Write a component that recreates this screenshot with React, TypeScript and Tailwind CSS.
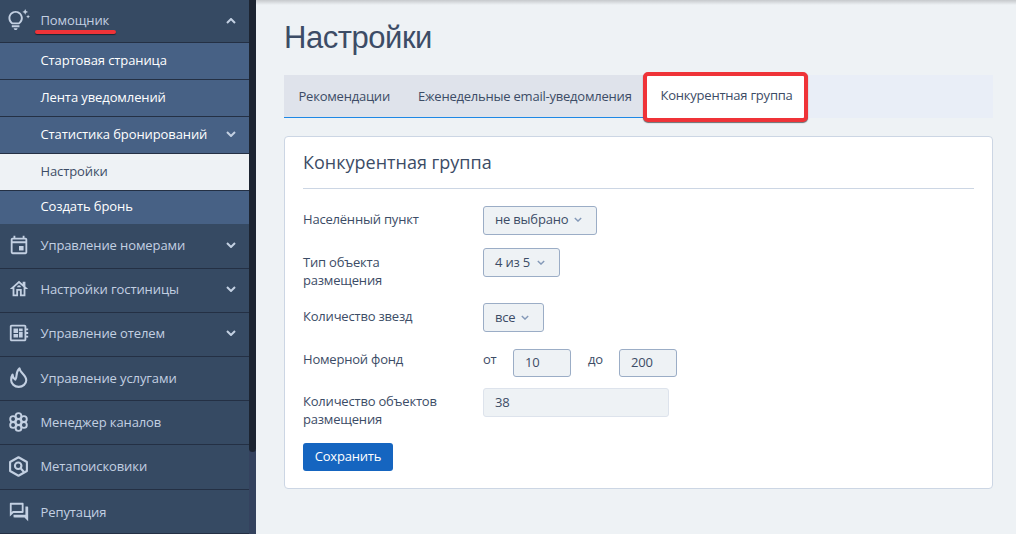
import React from 'react';
import { MdOutlineTipsAndUpdates, MdOutlineEvent, MdOutlineHouse, MdOutlineDeveloperBoard, MdOutlineForum } from 'react-icons/md';

type ChevronProps = {
  up?: boolean;
  className?: string;
}

function Chevron({up, className}: ChevronProps) {
  return (
    <svg viewBox="0 0 10 6" className={className} fill="none" stroke="currentColor">
      <path d={up ? 'M1 5l4-4 4 4' : 'M1 1l4 4 4-4'} />
    </svg>
  );
}

function FlameIcon() {
  return (
    <svg viewBox="0 0 20 20" className="w-[21px] h-[21px]" fill="none" stroke="currentColor" strokeWidth="2" strokeLinejoin="round">
      <path d="M11 1.300C10.800 5 17.400 7.800 17.400 12.600a7.200 6.300 0 0 1-14.400 0C3 10.600 3.300 8.700 4.300 7.200c.1 2 .9 3.700 2.700 4.900C9.200 9.400 6.700 5 11 1.300z" />
    </svg>
  );
}

function ChannelsIcon() {
  return (
    <svg viewBox="0 0 20 20" className="w-[21px] h-5" fill="none" stroke="currentColor" strokeWidth="1.9">
      <circle cx="10" cy="10" r="2.900" />
      <circle cx="10" cy="4" r="2.900" />
      <circle cx="10" cy="16" r="2.900" />
      <circle cx="4.600" cy="7" r="2.900" />
      <circle cx="15.400" cy="7" r="2.900" />
      <circle cx="4.600" cy="13" r="2.900" />
      <circle cx="15.400" cy="13" r="2.900" />
    </svg>
  );
}

function MetasearchIcon() {
  return (
    <svg viewBox="0 0 20 20" className="w-[21px] h-[21px]" fill="none" stroke="currentColor" strokeWidth="2">
      <path d="M10 1.200l8 4.500v8.600l-8 4.500-8-4.500V5.700z" strokeLinejoin="round" />
      <circle cx="9.700" cy="9.300" r="3.100" />
      <path d="M11.800 11.500l3.400 3.700" />
    </svg>
  );
}

const subItems = [
  { label: 'Стартовая страница', row: 'h-[37px] pb-0.5 border-b' },
  { label: 'Лента уведомлений', row: 'h-[37px] pb-0.5 border-b' },
  { label: 'Статистика бронирований', row: 'h-[37px] pb-0.5 border-b', arrow: true },
  { label: 'Настройки', row: 'h-[37px] pb-0.5 border-b', active: true },
  { label: 'Создать бронь', row: 'h-[33px] pb-1' },
];

const items = [
  { label: 'Управление номерами', icon: <MdOutlineEvent size={22} />, row: 'h-[45px] pb-0.5', arrow: true },
  { label: 'Настройки гостиницы', icon: <MdOutlineHouse size={22} />, row: 'h-11 pb-[3px]', arrow: true },
  { label: 'Управление отелем', icon: <MdOutlineDeveloperBoard size={22} />, row: 'h-11 pb-[3px]', arrow: true },
  { label: 'Управление услугами', icon: <FlameIcon />, row: 'h-11 pb-0.5' },
  { label: 'Менеджер каналов', icon: <ChannelsIcon />, row: 'h-11 pb-0.5' },
  { label: 'Метапоисковики', icon: <MetasearchIcon />, row: 'h-[45px] pb-0.5' },
  { label: 'Репутация', icon: <MdOutlineForum size={22} />, row: 'h-11' },
];

function Sidebar() {
  return (
    <aside className="flex w-64 shrink-0 bg-[#34425e]">
      <nav className="w-[249px] bg-[#364a63] text-[#c3d0e2] tracking-[-0.1px]">
        <div className="flex items-center h-[43px] border-b border-[#243044] pr-[13px] pb-px">
          <span className="w-[40.5px] pl-[7px]"><MdOutlineTipsAndUpdates size={23} /></span>
          <span className="relative flex-1 -top-px">
            Помощник
            <span className="absolute -left-[5.5px] top-[19px] w-[81px] h-1 rounded-full bg-[#ef3338] shadow-[0_1px_1px_rgba(0,0,0,0.5)]" />
          </span>
          <Chevron up className="w-2.5 h-1.5 stroke-2" />
        </div>
        {subItems.map((item) => (
          <div
            key={item.label}
            className={`flex items-center justify-between pl-[40.5px] pr-[13px] border-[#243044] ${item.row} ${item.active ? 'bg-[#eef2f5] text-[#3c4c66]' : 'bg-[#476185] text-white'}`}
          >
            {item.label}
            {item.arrow && <Chevron className="w-2.5 h-1.5 stroke-2 text-[#c3d0e2]" />}
          </div>
        ))}
        {items.map((item) => (
          <div key={item.label} className={`flex items-center border-b border-[#243044] pr-[13px] ${item.row}`}>
            <span className="w-[40.5px] pl-2">{item.icon}</span>
            <span className="flex-1">{item.label}</span>
            {item.arrow && <Chevron className="w-2.5 h-1.5 stroke-2" />}
          </div>
        ))}
      </nav>
      <div className="w-[7px] h-[452px] rounded-b-full bg-[#1c2431]" />
    </aside>
  );
}

function Select({value, width}: {value: string, width: string}) {
  return (
    <button className={`flex items-center justify-between h-[29px] pl-[11px] pr-[14px] border border-[#9badc6] rounded-[3px] bg-[#eef2f5] ${width}`}>
      {value}
      <Chevron className="w-2 h-[5px] stroke-[1.7] text-[#8499b8]" />
    </button>
  );
}

export default function App() {
  return (
    <div className="flex w-[1016px] h-[534px] overflow-hidden bg-[#eef2f5] font-['Open_Sans',sans-serif] text-[13px] leading-[18px] text-[#3c4c66]">
      <Sidebar />
      <main className="flex-1 pl-7 pr-[23px] bg-[linear-gradient(to_bottom,#c6c9cc,#eef2f5_5px)] tracking-[-0.2px]">
        <h1 className="pt-[19px] h-[75px] font-['Liberation_Sans',sans-serif] text-[31px] leading-[38px] tracking-[-0.45px]">Настройки</h1>
        <div className="flex h-[43px] bg-[#e9eef7] tracking-[-0.22px]">
          <div className="flex items-center w-[360px] border-b border-[#1e88e5] bg-[#dfe3eb]">
            <span className="w-[134px] pl-[14.5px]">Рекомендации</span>
            <span className="whitespace-nowrap">Еженедельные email-уведомления</span>
          </div>
          <div className="relative z-10 -mt-[3px] -ml-px w-[165px] h-[50px] border-4 border-[#ef3338] rounded-[5px] bg-white pl-[13.5px] pt-[10px] shadow-[0_1px_1px_rgba(0,0,0,0.55)]">
            Конкурентная группа
          </div>
        </div>

        <section className="mt-[18px] h-[353px] border border-[#ccd6e4] rounded bg-white px-[18px]">
          <h2 className="h-[52px] pt-[13px] border-b border-[#ccd6e4] text-lg leading-6 tracking-normal">Конкурентная группа</h2>
          <div className="flex items-start h-[43px] mt-[17px]">
            <label className="w-[180px] pt-1">Населённый пункт</label>
            <Select value="не выбрано" width="w-[114px] pb-[3px]" />
          </div>
          <div className="flex items-start h-[54px] -mt-px">
            <label className="w-[180px] pr-10 pt-[5px]">Тип объекта размещения</label>
            <Select value="4 из 5" width="w-[77px] pb-px" />
          </div>
          <div className="flex items-start h-[46px] mt-px">
            <label className="w-[180px] pt-1">Количество звезд</label>
            <Select value="все" width="w-[61px] pb-px" />
          </div>
          <div className="flex items-start h-[39px]">
            <label className="w-[180px] pt-px">Номерной фонд</label>
            <span className="w-[30px] pt-px">от</span>
            <input className="w-[58px] h-7 px-[11px] pb-0.5 border border-[#9badc6] rounded-[3px] bg-[#eef2f5]" defaultValue="10" />
            <span className="w-12 pl-[17px] pt-px">до</span>
            <input className="w-[58px] h-7 px-[11px] pb-0.5 border border-[#9badc6] rounded-[3px] bg-[#eef2f5]" defaultValue="200" />
          </div>
          <div className="flex items-start h-[55px]">
            <label className="w-[180px] pr-10 pt-1">Количество объектов размещения</label>
            <input className="w-[186px] h-[29px] px-[11px] pb-0.5 border border-[#dde3ec] rounded-[3px] bg-[#eef2f5]" defaultValue="38" readOnly />
          </div>
          <button className="w-[90px] h-7 pb-[3px] rounded-[3px] bg-[#1565c0] text-white">Сохранить</button>
        </section>
      </main>
    </div>
  );
}
